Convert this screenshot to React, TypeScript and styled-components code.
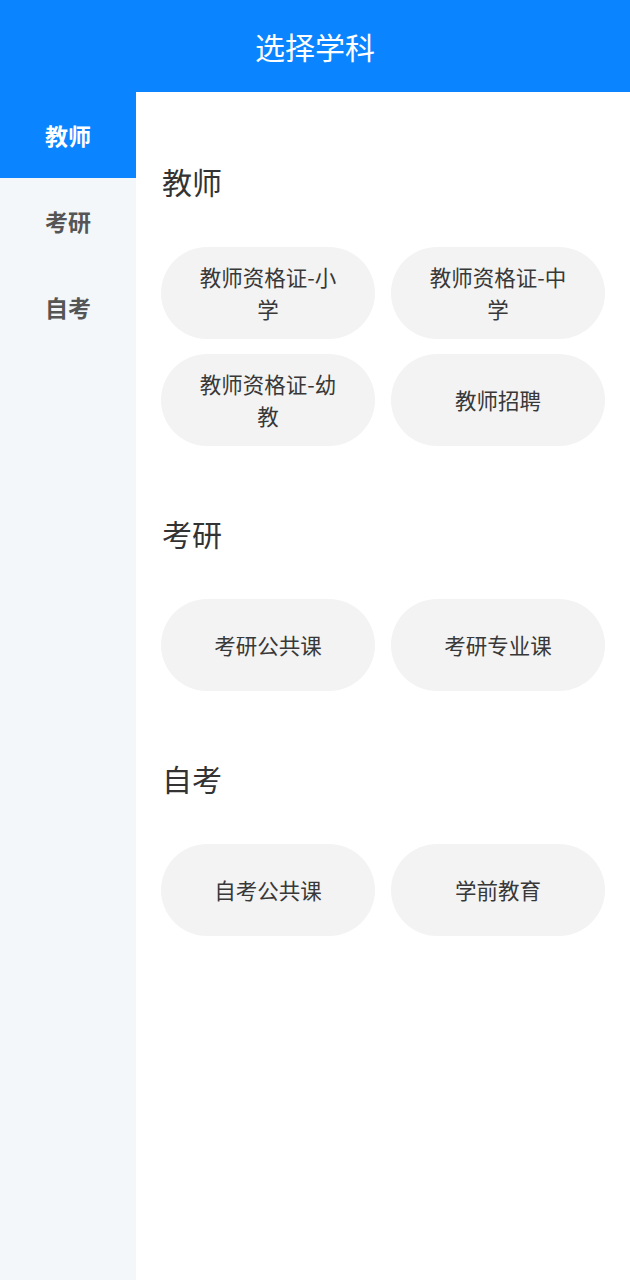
import styled, { createGlobalStyle } from "styled-components";

const GlobalStyle = createGlobalStyle`
  html, body {
    margin: 0;
    padding: 0;
    background: #ffffff;
    font-family: "Noto Sans CJK SC", "Noto Sans", sans-serif;
  }
`;

const Page = styled.div`
  width: 630px;
  height: 1280px;
  display: flex;
  flex-direction: column;
`;

const Header = styled.header`
  height: 92px;
  flex-shrink: 0;
  background: #0a84ff;
  color: #ffffff;
  font-size: 30px;
  display: flex;
  align-items: center;
  justify-content: center;
`;

const Body = styled.div`
  flex: 1;
  display: flex;
`;

const Sidebar = styled.nav`
  width: 136px;
  flex-shrink: 0;
  background: #f3f7fa;
`;

const NavItem = styled.div<{ $active?: boolean }>`
  height: 86px;
  display: flex;
  align-items: center;
  justify-content: center;
  font-size: 23px;
  font-weight: 700;
  color: ${(p) => (p.$active ? "#ffffff" : "#555555")};
  background: ${(p) => (p.$active ? "#0a84ff" : "transparent")};
`;

const Content = styled.main`
  flex: 1;
  padding: 2px 25px 0;
`;

const Section = styled.section`
  padding-top: 67px;
`;

const SectionTitle = styled.h2`
  margin: 0 0 46px 1px;
  height: 40px;
  line-height: 40px;
  font-size: 30px;
  font-weight: 400;
  color: #333333;
`;

const Grid = styled.div`
  display: grid;
  grid-template-columns: 1fr 1fr;
  gap: 15px 16px;
`;

const Pill = styled.div`
  height: 92px;
  border-radius: 46px;
  background: #f3f3f3;
  display: flex;
  align-items: center;
  justify-content: center;
  text-align: center;
  padding: 0 34px;
  box-sizing: border-box;
  font-size: 21.5px;
  line-height: 32px;
  color: #383838;
`;

const sections = [
  {
    title: "教师",
    items: ["教师资格证-小学", "教师资格证-中学", "教师资格证-幼教", "教师招聘"],
  },
  { title: "考研", items: ["考研公共课", "考研专业课"] },
  { title: "自考", items: ["自考公共课", "学前教育"] },
];

export default function App() {
  return (
    <>
      <GlobalStyle />
      <Page>
        <Header>选择学科</Header>
        <Body>
          <Sidebar>
            {sections.map((s, i) => (
              <NavItem key={s.title} $active={i === 0}>
                {s.title}
              </NavItem>
            ))}
          </Sidebar>
          <Content>
            {sections.map((s) => (
              <Section key={s.title}>
                <SectionTitle>{s.title}</SectionTitle>
                <Grid>
                  {s.items.map((item) => (
                    <Pill key={item}>{item}</Pill>
                  ))}
                </Grid>
              </Section>
            ))}
          </Content>
        </Body>
      </Page>
    </>
  );
}
